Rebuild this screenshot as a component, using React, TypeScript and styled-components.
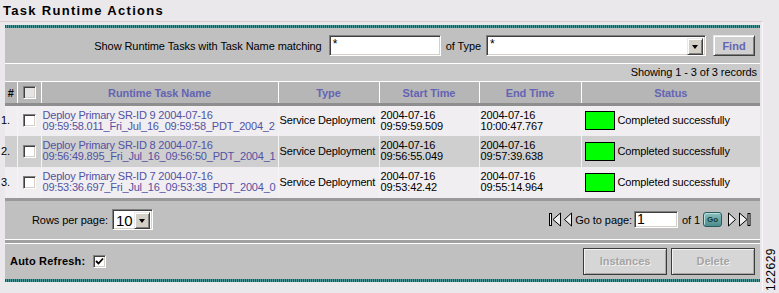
import React from 'react'
import styled, { createGlobalStyle, css } from 'styled-components'

const GlobalStyle = createGlobalStyle`
  html, body {
    margin: 0;
    padding: 0;
    background: #ebe8eb;
  }
  body {
    font-family: "Liberation Sans", Arial, sans-serif;
    font-size: 11px;
    letter-spacing: -0.08px;
    color: #000;
  }
`

const sunken = css`
  box-sizing: border-box;
  background: #fff;
  border-style: solid;
  border-width: 1px;
  border-color: #808080 #fff #fff #808080;
  box-shadow: inset 1px 1px 0 #404040, inset -1px -1px 0 #d4d0c8;
`

const raised = css`
  box-sizing: border-box;
  background: #d4d0c8;
  border-style: solid;
  border-width: 1px;
  border-color: #e8e8e8 #404040 #404040 #e8e8e8;
  box-shadow: inset 1px 1px 0 #fff, inset -1px -1px 0 #808080;
`

const Page = styled.div`
  display: flex;
  width: 779px;
  height: 293px;
  overflow: hidden;
`

const Main = styled.div`
  flex: none;
  width: 763px;
`

const Gutter = styled.div`
  flex: 1;
  display: flex;
  align-items: flex-end;
  justify-content: center;
  padding-bottom: 2px;
`

const FigureNo = styled.span`
  writing-mode: vertical-rl;
  transform: rotate(180deg);
  font-size: 12px;
  letter-spacing: 0.5px;
`

const Title = styled.h1`
  margin: 0;
  box-sizing: border-box;
  height: 21px;
  padding: 3px 0 0 3px;
  font-size: 13px;
  line-height: 16px;
  font-weight: bold;
  letter-spacing: 1.3px;
`

const Frame = styled.div`
  border-top: 1px solid #dccbc8;
  border-right: 1px solid #faf8fa;
  padding: 3px 2px 10px 5px;
`

const tealRule = css`
  content: '';
  display: block;
  height: 3px;
  background: repeating-linear-gradient(90deg, #0f5f5f 0 1px, #4f9999 1px 2px);
`

const Panel = styled.div`
  background: #c0c0c0;

  &::before,
  &::after {
    ${tealRule}
  }
`

const FilterBar = styled.div`
  height: 35px;
  display: flex;
  align-items: center;
  justify-content: flex-end;
  padding-right: 5px;
  border-bottom: 1px solid #fff;
`

const FieldLabel = styled.span<{ $gap?: number }>`
  margin-right: ${p => p.$gap ?? 5}px;
  white-space: nowrap;
`

const TextField = styled.div<{ $w: number; $h?: number }>`
  ${sunken}
  width: ${p => p.$w}px;
  height: ${p => p.$h ?? 21}px;
  padding: 1px 3px;
  font-size: 12px;
  line-height: 14px;
`

const ComboBox = styled.div<{ $w: number; $big?: boolean }>`
  ${sunken}
  width: ${p => p.$w}px;
  height: 21px;
  display: flex;
  justify-content: space-between;
  padding: 2px;
  font-size: ${p => (p.$big ? 15 : 12)}px;
  line-height: ${p => (p.$big ? 17 : 12)}px;
`

const ComboValue = styled.span`
  padding-left: 1px;
`

const DropButton = styled.span`
  ${raised}
  width: 16px;
  height: 17px;
  display: flex;
  align-items: center;
  justify-content: center;

  &::after {
    content: '';
    border-left: 3.5px solid transparent;
    border-right: 3.5px solid transparent;
    border-top: 4px solid #000;
  }
`

const FindButton = styled.button`
  ${raised}
  margin-left: 7px;
  width: 42px;
  height: 21px;
  padding: 0;
  background: #d0d0d0;
  font-family: inherit;
  font-size: 11px;
  font-weight: bold;
  color: #6464b0;
`

const InfoBar = styled.div`
  height: 17px;
  line-height: 17px;
  background: #cacaca;
  text-align: right;
  padding-right: 3px;
  border-bottom: 1px solid #fff;
`

const Table = styled.table`
  width: 755px;
  table-layout: fixed;
  border-collapse: collapse;
`

const HeadCell = styled.th`
  height: 21px;
  padding: 0;
  background: #b6b6b6;
  color: #6464b4;
  font-size: 11px;
  font-weight: bold;
  text-align: center;
  border-left: 1px solid #fff;
  border-bottom: 3px solid #8e8e8e;

  &:first-child {
    border-left: none;
    color: #000;
  }
`

const Row = styled.tr<{ $alt: boolean }>`
  height: 31px;
  background: ${p => (p.$alt ? '#cfcfcf' : '#f0eef0')};
`

const Cell = styled.td`
  padding: 0 0 0 1px;
  border-left: 1px solid #f4f4f4;
  white-space: nowrap;
  vertical-align: middle;
  line-height: 11px;
  letter-spacing: -0.15px;
  overflow: visible;

  &:first-child {
    border-left: none;
  }
`

const CenterCell = styled(Cell)`
  text-align: center;
  padding: 0;
`

const RowNo = styled.span`
  margin-left: -5px;
`

const TaskLink = styled.a`
  color: #5252a4;
  text-decoration: none;
  letter-spacing: -0.2px;
`

const StatusWrap = styled.div`
  display: flex;
  align-items: center;
  gap: 3px;
  padding-left: 2px;
`

const StatusSwatch = styled.span<{ $color: string }>`
  width: 30px;
  height: 19px;
  box-sizing: border-box;
  border: 1px solid #000;
  background: ${p => p.$color};
`

const CheckBox = styled.span<{ $dim?: boolean }>`
  ${sunken}
  display: inline-flex;
  align-items: center;
  justify-content: center;
  width: 13px;
  height: 13px;
  vertical-align: middle;
  background: ${p => (p.$dim ? '#e4e4e4' : '#fff')};
`

const Pager = styled.div`
  height: 38px;
  display: flex;
  align-items: center;
  justify-content: space-between;
  padding: 0 6px 0 27px;
  border-top: 3px solid #999;
`

const PagerGroup = styled.div`
  display: flex;
  align-items: center;
`

const NavIcon = styled.svg`
  display: block;
  margin-right: 3px;
`

const GoButton = styled.span`
  box-sizing: border-box;
  width: 19px;
  height: 15px;
  margin: 0 6px 0 3px;
  border: 1px solid #2c5c5c;
  border-radius: 3px;
  background: linear-gradient(#8cc0c0, #4c8c8c);
  box-shadow: inset 1px 1px 0 #b8dede;
  color: #0e3a3a;
  font-size: 8px;
  font-weight: bold;
  line-height: 13px;
  text-align: center;
`

const Divider = styled.div`
  height: 3px;
  background: #a0a0a0;
  border-top: 1px solid #fff;
  border-bottom: 1px solid #fff;
`

const ActionBar = styled.div`
  height: 35px;
  display: flex;
  align-items: center;
  justify-content: space-between;
  padding: 0 5px 0 5px;
`

const AutoRefresh = styled.label`
  display: flex;
  align-items: center;
  gap: 8px;
  font-weight: bold;
  letter-spacing: 0.2px;
`

const ButtonGroup = styled.div`
  display: flex;
  gap: 4px;
`

const ActionButton = styled.button`
  box-sizing: border-box;
  width: 84px;
  height: 27px;
  padding: 0;
  background: #d6d6d6;
  border: 1px solid #3c3c3c;
  box-shadow: inset 1px 1px 0 #f4f4f4, inset -1px -1px 0 #a8a8a8;
  font-family: inherit;
  font-size: 11px;
  font-weight: bold;
  color: #a4a4a4;
  text-shadow: 1px 1px 0 #f2f2f2;
`

const Check = () => (
  <svg width="9" height="9" viewBox="0 0 9 9">
    <path d="M1 4 L3.5 6.5 L8 1.5" fill="none" stroke="#000" strokeWidth="1.8" />
  </svg>
)

const FirstIcon = () => (
  <NavIcon width="12" height="15" viewBox="0 0 12 15">
    <rect x="0.5" y="1.5" width="2" height="12" fill="#eee" stroke="#000" />
    <polygon points="11.5,1 4,7.5 11.5,14" fill="#eee" stroke="#000" />
  </NavIcon>
)

const PrevIcon = () => (
  <NavIcon width="8" height="15" viewBox="0 0 8 15">
    <polygon points="7.5,1 0.5,7.5 7.5,14" fill="#eee" stroke="#000" />
  </NavIcon>
)

const NextIcon = () => (
  <NavIcon width="8" height="15" viewBox="0 0 8 15">
    <polygon points="0.5,1 7.5,7.5 0.5,14" fill="#eee" stroke="#000" />
  </NavIcon>
)

const LastIcon = () => (
  <NavIcon width="12" height="15" viewBox="0 0 12 15">
    <polygon points="0.5,1 8,7.5 0.5,14" fill="#eee" stroke="#000" />
    <rect x="9" y="1.5" width="2" height="12" fill="#eee" stroke="#000" />
  </NavIcon>
)

const tasks = [
  {
    id: 9,
    name: '09:59:58.011_Fri_Jul_16_09:59:58_PDT_2004_2',
    start: ['2004-07-16', '09:59:59.509'],
    end: ['2004-07-16', '10:00:47.767'],
  },
  {
    id: 8,
    name: '09:56:49.895_Fri_Jul_16_09:56:50_PDT_2004_1',
    start: ['2004-07-16', '09:56:55.049'],
    end: ['2004-07-16', '09:57:39.638'],
  },
  {
    id: 7,
    name: '09:53:36.697_Fri_Jul_16_09:53:38_PDT_2004_0',
    start: ['2004-07-16', '09:53:42.42'],
    end: ['2004-07-16', '09:55:14.964'],
  },
]

const App: React.FC = () => (
  <Page>
    <GlobalStyle />
    <Main>
      <Title>Task Runtime Actions</Title>
      <Frame>
        <Panel>
          <FilterBar>
            <FieldLabel $gap={7}>Show Runtime Tasks with Task Name matching</FieldLabel>
            <TextField $w={112}>*</TextField>
            <FieldLabel style={{ marginLeft: 5 }}>of Type</FieldLabel>
            <ComboBox $w={220}>
              <ComboValue>*</ComboValue>
              <DropButton />
            </ComboBox>
            <FindButton>Find</FindButton>
          </FilterBar>
          <InfoBar>Showing 1 - 3 of 3 records</InfoBar>
          <Table>
            <colgroup>
              <col style={{ width: 12 }} />
              <col style={{ width: 24 }} />
              <col style={{ width: 237 }} />
              <col style={{ width: 101 }} />
              <col style={{ width: 100 }} />
              <col style={{ width: 102 }} />
              <col style={{ width: 179 }} />
            </colgroup>
            <thead>
              <tr>
                <HeadCell>#</HeadCell>
                <HeadCell>
                  <CheckBox $dim />
                </HeadCell>
                <HeadCell>Runtime Task Name</HeadCell>
                <HeadCell>Type</HeadCell>
                <HeadCell>Start Time</HeadCell>
                <HeadCell>End Time</HeadCell>
                <HeadCell>Status</HeadCell>
              </tr>
            </thead>
            <tbody>
              {tasks.map((t, i) => (
                <Row key={t.id} $alt={i % 2 === 1}>
                  <Cell>
                    <RowNo>{i + 1}.</RowNo>
                  </Cell>
                  <CenterCell>
                    <CheckBox />
                  </CenterCell>
                  <Cell>
                    <TaskLink>
                      Deploy Primary SR-ID {t.id} 2004-07-16
                      <br />
                      {t.name}
                    </TaskLink>
                  </Cell>
                  <Cell>Service Deployment</Cell>
                  <Cell>
                    {t.start[0]}
                    <br />
                    {t.start[1]}
                  </Cell>
                  <Cell>
                    {t.end[0]}
                    <br />
                    {t.end[1]}
                  </Cell>
                  <Cell>
                    <StatusWrap>
                      <StatusSwatch $color="#00ff00" />
                      Completed successfully
                    </StatusWrap>
                  </Cell>
                </Row>
              ))}
            </tbody>
          </Table>
          <Pager>
            <PagerGroup>
              <FieldLabel $gap={4}>Rows per page:</FieldLabel>
              <ComboBox $w={41} $big>
                <ComboValue>10</ComboValue>
                <DropButton />
              </ComboBox>
            </PagerGroup>
            <PagerGroup>
              <FirstIcon />
              <PrevIcon />
              <FieldLabel $gap={2}>Go to page:</FieldLabel>
              <TextField $w={44} $h={17} style={{ fontSize: 14, padding: '0 2px' }}>
                1
              </TextField>
              <FieldLabel style={{ marginLeft: 4, marginRight: 0 }}>of 1</FieldLabel>
              <GoButton>Go</GoButton>
              <NextIcon />
              <LastIcon />
            </PagerGroup>
          </Pager>
          <Divider />
          <ActionBar>
            <AutoRefresh>
              Auto Refresh:
              <CheckBox>
                <Check />
              </CheckBox>
            </AutoRefresh>
            <ButtonGroup>
              <ActionButton disabled>Instances</ActionButton>
              <ActionButton disabled>Delete</ActionButton>
            </ButtonGroup>
          </ActionBar>
        </Panel>
      </Frame>
    </Main>
    <Gutter>
      <FigureNo>122629</FigureNo>
    </Gutter>
  </Page>
)

export default App
